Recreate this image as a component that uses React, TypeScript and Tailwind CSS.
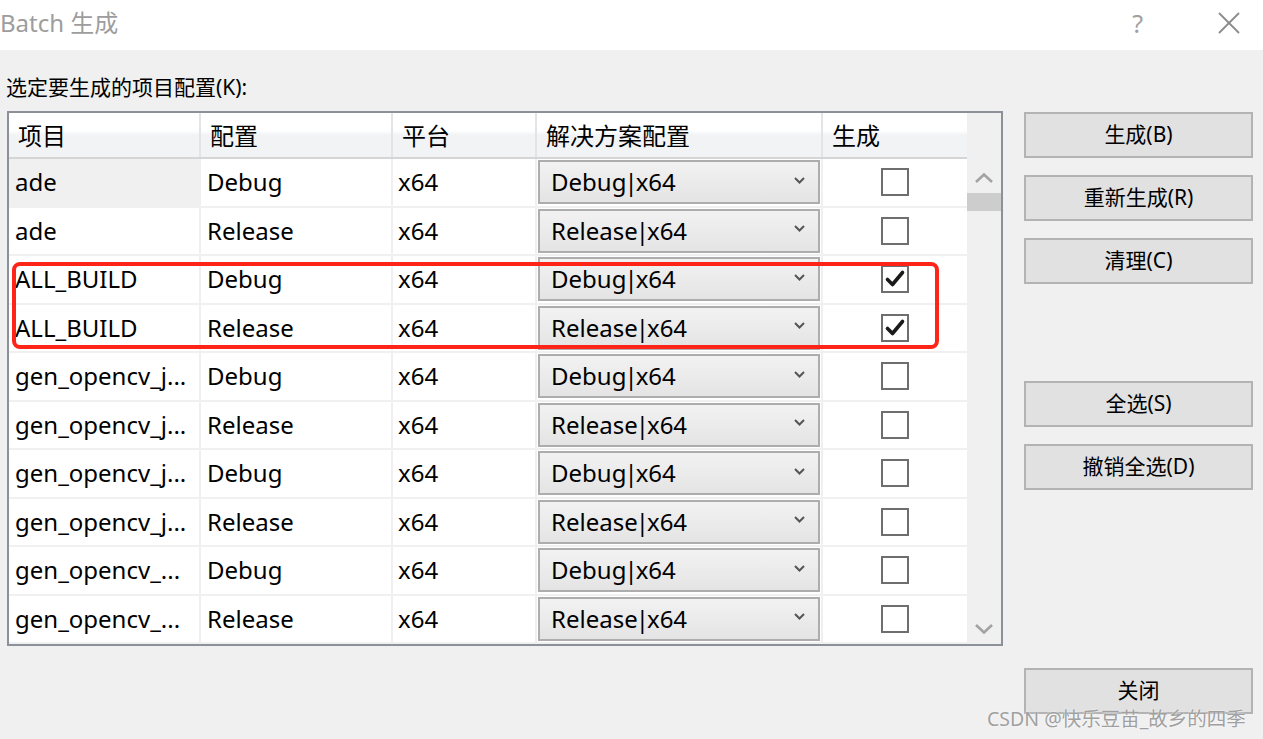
import React from "react";

type Row = { name: string; config: string; checked: boolean };

const rows: Row[] = [
  { name: "ade", config: "Debug", checked: false },
  { name: "ade", config: "Release", checked: false },
  { name: "ALL_BUILD", config: "Debug", checked: true },
  { name: "ALL_BUILD", config: "Release", checked: true },
  { name: "gen_opencv_j...", config: "Debug", checked: false },
  { name: "gen_opencv_j...", config: "Release", checked: false },
  { name: "gen_opencv_j...", config: "Debug", checked: false },
  { name: "gen_opencv_j...", config: "Release", checked: false },
  { name: "gen_opencv_...", config: "Debug", checked: false },
  { name: "gen_opencv_...", config: "Release", checked: false },
];

const Chevron: React.FC<{ up?: boolean; big?: boolean }> = ({ up, big }) => (
  <svg
    width={big ? 18 : 11}
    height={big ? 10 : 7}
    viewBox={big ? "0 0 18 10" : "0 0 11 7"}
    fill="none"
    stroke={big ? "#a3a3a3" : "#555"}
    strokeWidth={big ? 2.6 : 2}
  >
    {big ? (
      <polyline points={up ? "1,9 9,1.5 17,9" : "1,1 9,8.5 17,1"} />
    ) : (
      <polyline points="1,1 5.5,5.5 10,1" />
    )}
  </svg>
);

const CheckBox: React.FC<{ checked: boolean }> = ({ checked }) => (
  <div className="w-[28px] h-[28px] border-2 border-[#6e6e6e] bg-white flex items-center justify-center">
    {checked && (
      <svg width="22" height="20" viewBox="0 0 22 20" fill="none" stroke="#1a1a1a" strokeWidth="3.6" strokeLinecap="round" strokeLinejoin="round">
        <polyline points="3.5,10.5 8.5,15.5 18.5,3.5" />
      </svg>
    )}
  </div>
);

const Button: React.FC<{ label: string; className?: string }> = ({ label, className }) => (
  <div className={`h-[46px] w-[229px] border-2 border-[#b3b3b3] bg-[#e1e1e1] flex items-center justify-center text-[21px] text-black ${className ?? ""}`}>
    {label}
  </div>
);

export default function App() {
  return (
    <div className="relative w-[1263px] h-[739px] overflow-hidden bg-[#f0f0f0] font-['Noto_Sans','Noto_Sans_CJK_SC',sans-serif]">
      {/* title bar */}
      <div className="h-[50px] bg-white flex items-center">
        <span className="text-[24px] text-[#9d9d9d] leading-none -mt-[4px]">Batch 生成</span>
        <span className="ml-auto text-[25px] text-[#a0a0a0] leading-none -mt-[4px] mr-[74px]">?</span>
        <svg width="24" height="24" viewBox="0 0 24 24" stroke="#8a8a8a" strokeWidth="1.8" className="mr-[22px] -mt-[4px]">
          <line x1="2" y1="2" x2="22" y2="22" />
          <line x1="22" y1="2" x2="2" y2="22" />
        </svg>
      </div>

      <div className="flex">
        {/* left side */}
        <div className="pl-[7px] pt-[23px]">
          <div className="-ml-px h-[28px] leading-[28px] text-[21px] text-black whitespace-nowrap">选定要生成的项目配置(K):</div>
          <div className="mt-[10px] w-[996px] border-2 border-[#8b9099] bg-[#f0f0f0] flex">
            <div className="w-[958px] flex flex-col">
              {/* header */}
              <div className="h-[46px] flex gap-[2px] bg-[#e4e4e4] border-b-2 border-[#d5d5d5] text-[24px] text-black">
                {[
                  ["项目", "w-[190px]"],
                  ["配置", "w-[190px]"],
                  ["平台", "w-[142px]"],
                  ["解决方案配置", "w-[284px]"],
                  ["生成", "w-[144px]"],
                ].map(([t, w]) => (
                  <div
                    key={t}
                    className={`${w} h-full pl-[9px] flex items-center bg-[linear-gradient(to_bottom,#ffffff_0%,#ffffff_40%,#f2f3f5_50%,#f2f3f5_100%)]`}
                  >
                    <span className="mt-[1px]">{t}</span>
                  </div>
                ))}
              </div>
              {/* rows */}
              <div className="flex flex-col gap-[2px] pb-[2px] text-[24px] text-black">
                {rows.map((r, i) => (
                  <div key={i} className="h-[46.5px] flex gap-[2px]">
                    <div className={`w-[190px] pl-[6px] flex items-center whitespace-nowrap ${i === 0 ? "bg-[#f0f0f0]" : "bg-white"}`}>
                      {r.name}
                    </div>
                    <div className="w-[190px] pl-[6px] flex items-center bg-white">{r.config}</div>
                    <div className="w-[142px] pl-[5px] flex items-center bg-white">x64</div>
                    <div className="w-[284px] bg-white flex items-center">
                      <div className="ml-px w-[282px] h-[44px] border-2 border-[#adadad] bg-[linear-gradient(to_bottom,#f2f2f2,#e4e4e4)] flex items-center pl-[11px] pr-[13px] whitespace-nowrap">
                        <span>
                          {r.config}
                          <span className="-mx-[2px]">|</span>
                          x64
                        </span>
                        <span className="ml-auto -mt-[4px]">
                          <Chevron />
                        </span>
                      </div>
                    </div>
                    <div className="w-[144px] bg-white flex items-center justify-center">
                      <CheckBox checked={r.checked} />
                    </div>
                  </div>
                ))}
              </div>
            </div>
            {/* scrollbar */}
            <div className="w-[34px] flex flex-col items-center bg-[#f0f0f0]">
              <div className="h-[56px]" />
              <div className="h-[18px] flex items-center justify-center">
                <Chevron up big />
              </div>
              <div className="mt-[6px] h-[18px] w-full bg-[#cdcdcd]" />
              <div className="flex-1" />
              <div className="h-[18px] flex items-center justify-center">
                <Chevron big />
              </div>
              <div className="h-[6px]" />
            </div>
          </div>
        </div>

        {/* right side buttons */}
        <div className="ml-[21px] pt-[62px] flex flex-col">
          <Button label="生成(B)" />
          <Button label="重新生成(R)" className="mt-[17px]" />
          <Button label="清理(C)" className="mt-[17px]" />
          <Button label="全选(S)" className="mt-[97px]" />
          <Button label="撤销全选(D)" className="mt-[17px]" />
          <Button label="关闭" className="mt-[178px]" />
        </div>
      </div>

      {/* red highlight annotation */}
      <div className="absolute left-[12px] top-[262px] w-[927px] h-[87px] border-4 border-[#ff2418] rounded-[8px] pointer-events-none" />

      {/* watermark */}
      <div className="absolute left-[987px] top-[706px] text-[19.5px] leading-[26px] text-[#a0a0a0] whitespace-nowrap [text-shadow:0_0_2px_#ffffff]">
        CSDN @快乐豆苗_故乡的四季
      </div>
    </div>
  );
}
